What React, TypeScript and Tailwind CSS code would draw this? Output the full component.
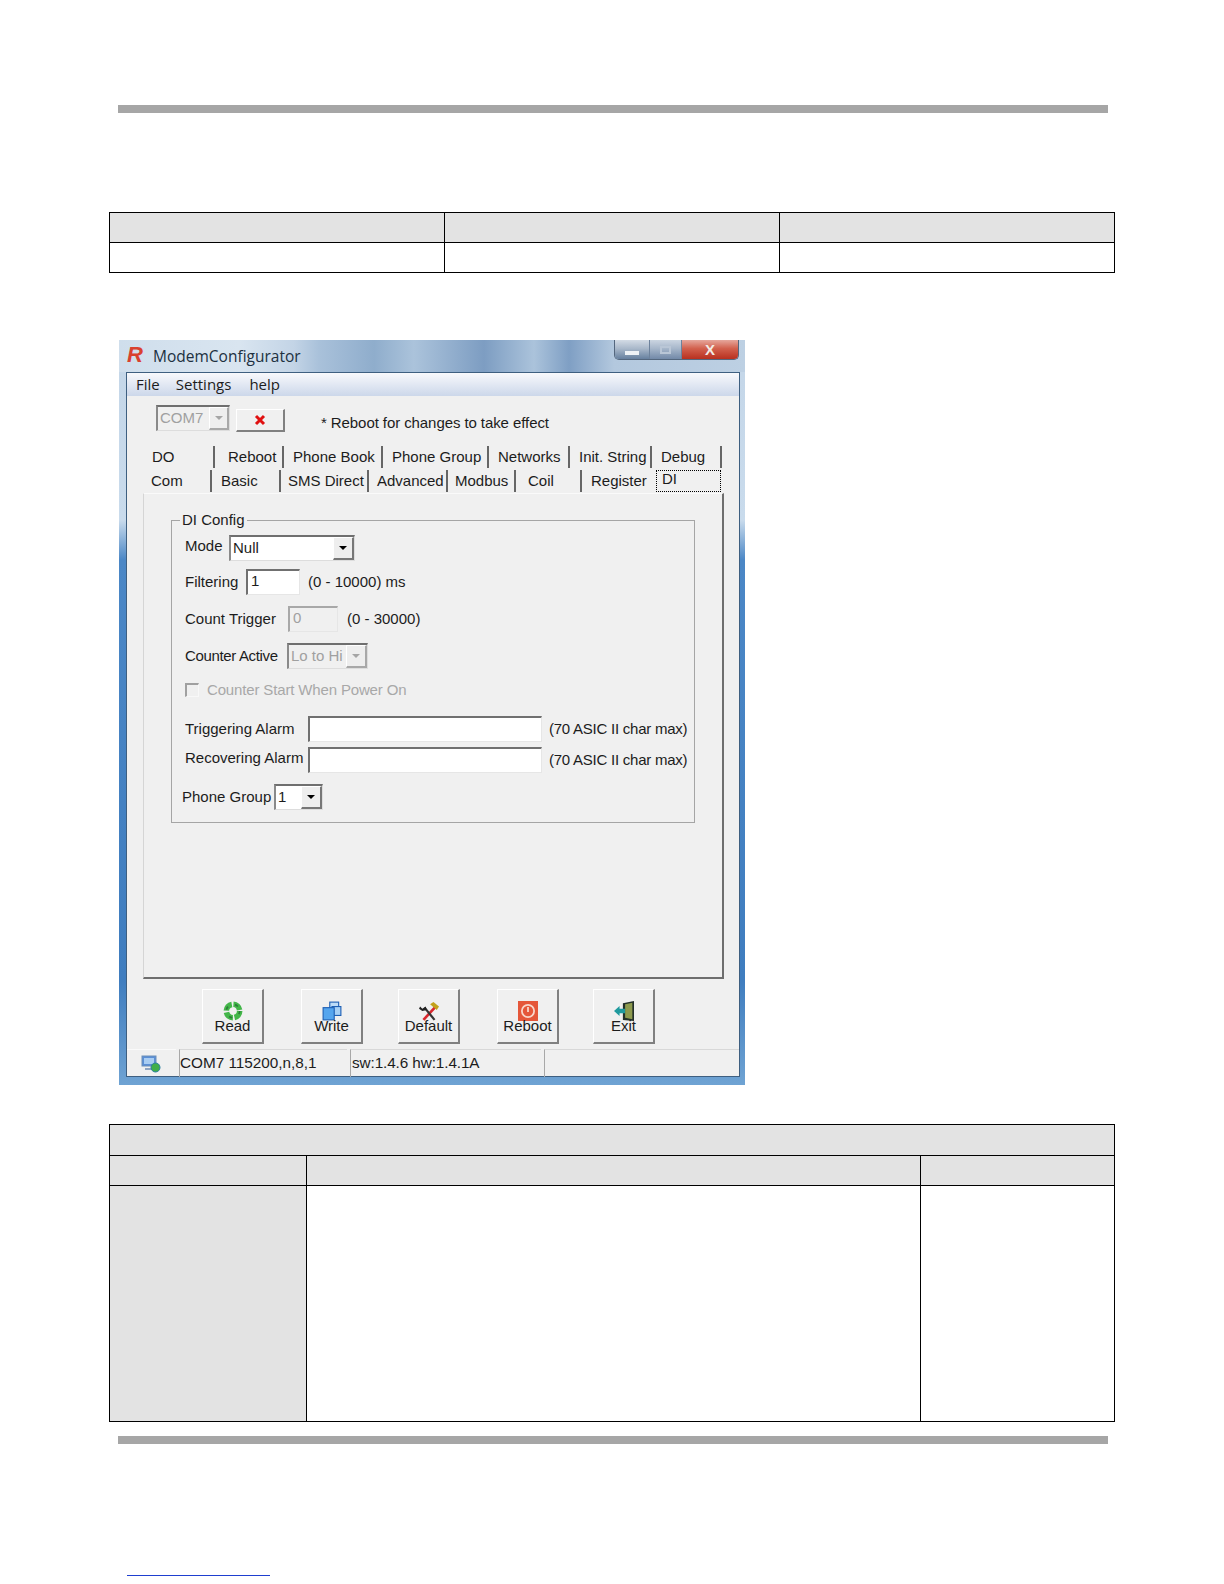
import type { ReactNode } from "react";

const Bar = () => <div className="ml-[118px] h-[8px] w-[990px] bg-[#a6a6a6]" />;

const HeadCell = ({ className = "", span }: { className?: string; span?: number }) => (
  <td colSpan={span} className={`h-[30px] border border-black bg-[#e3e3e3] ${className}`} />
);
const BodyCell = ({ className = "" }: { className?: string }) => (
  <td className={`border border-black bg-white ${className}`} />
);

const ArrowButton = ({ disabled, w }: { disabled?: boolean; w: string }) => (
  <div
    className={`${w} flex h-full shrink-0 items-center justify-center border-t border-l border-t-white border-l-white bg-[#eeeeee] border-r-2 border-b-2 ${
      disabled ? "border-r-[#a8a8a8] border-b-[#a8a8a8]" : "border-r-[#777777] border-b-[#777777]"
    }`}
  >
    <div
      className={`h-0 w-0 border-x-[4px] border-t-[4px] border-x-transparent ${
        disabled ? "border-t-[#a5a5a5]" : "border-t-black"
      }`}
    />
  </div>
);

const Combo = ({
  text,
  w,
  btn,
  disabled,
  h = "h-[26px]",
}: {
  text: string;
  w: string;
  btn: string;
  disabled?: boolean;
  h?: string;
}) => (
  <div
    className={`${w} ${h} flex shrink-0 items-center border-2 border-r border-b border-t-[#6f6f6f] border-l-[#8a8a8a] border-r-[#dddddd] border-b-[#dddddd] ${
      disabled ? "bg-[#f0f0f0] text-[#a0a0a0]" : "bg-white"
    }`}
  >
    <span className="flex-1 pl-[2px] whitespace-nowrap">{text}</span>
    <ArrowButton w={btn} disabled={disabled} />
  </div>
);

const Input = ({ w, value, disabled }: { w: string; value?: string; disabled?: boolean }) => (
  <div
    className={`${w} flex h-[26px] shrink-0 items-center border-t-2 border-l-2 border-r border-b border-r-[#e6e6e6] border-b-[#e6e6e6] pb-[3px] pl-[3px] ${
      disabled
        ? "border-t-[#a8a8a8] border-l-[#a8a8a8] bg-[#f0f0f0] text-[#a0a0a0]"
        : "border-t-[#707070] border-l-[#707070] bg-white"
    }`}
  >
    {value}
  </div>
);

const Row = ({ mt, children, className = "" }: { mt: string; children: ReactNode; className?: string }) => (
  <div className={`${mt} flex h-[26px] items-center whitespace-nowrap ${className}`}>{children}</div>
);

const Tab = ({ label, w, pl }: { label: string; w: string; pl: string }) => (
  <div className={`${w} ${pl} flex h-[22px] shrink-0 items-center whitespace-nowrap border-r-2 border-r-[#666666]`}>
    {label}
  </div>
);

const ToolButton = ({ icon, label, ml }: { icon: ReactNode; label: string; ml: string }) => (
  <div
    className={`${ml} flex h-[55px] w-[62px] shrink-0 flex-col items-center border-t border-l border-t-white border-l-white border-r-2 border-b-2 border-r-[#808080] border-b-[#808080] pt-[11px]`}
  >
    <div className="h-[20px] w-[20px]">{icon}</div>
    <div className="mt-[-4px] leading-[18px]">{label}</div>
  </div>
);

const ReadIcon = () => (
  <svg viewBox="0 0 18 18" className="h-full w-full">
    <circle cx="9" cy="9" r="6" fill="none" stroke="#43b649" strokeWidth="5" strokeDasharray="8 1.5" />
    <circle cx="9" cy="9" r="6" fill="none" stroke="#2c7d3a" strokeWidth="1.5" strokeDasharray="3 7" />
  </svg>
);

const WriteIcon = () => (
  <svg viewBox="0 0 18 18" className="h-full w-full">
    <rect x="7" y="1" width="8" height="8" fill="#bcdcf8" stroke="#1d5fb4" />
    <rect x="9" y="5" width="8" height="8" fill="#a5cff5" stroke="#1d5fb4" />
    <rect x="1" y="6" width="10" height="11" fill="#54a5ee" stroke="#1d5fb4" />
  </svg>
);

const DefaultIcon = () => (
  <svg viewBox="0 0 18 18" className="h-full w-full">
    <path d="M4 17 15 5" stroke="#d8282f" strokeWidth="2.4" />
    <path d="M5 6 14 17" stroke="#333333" strokeWidth="2" />
    <path d="M10 3 13 1 18 5 16 8Z" fill="#c2a21c" />
    <path d="M1 5 3 7 6 5 7 8 3 9 0 7Z" fill="#222222" />
  </svg>
);

const RebootIcon = () => (
  <svg viewBox="0 0 18 18" className="h-full w-full">
    <rect width="18" height="18" fill="#e5573a" />
    <circle cx="9" cy="9" r="5.5" fill="none" stroke="#f8d8cc" strokeWidth="1.6" />
    <path d="M9 5.5V10" stroke="#f8d8cc" strokeWidth="1.6" />
  </svg>
);

const ExitIcon = () => (
  <svg viewBox="0 0 18 18" className="h-full w-full">
    <path d="M8 2 18 0V18L8 17Z" fill="#23302a" />
    <path d="M10 3 16.5 1.5V16.5L10 15Z" fill="#8d9a4e" />
    <path d="M0 9 5 4.5V7H10V11H5V13.5Z" fill="#1f9a9e" />
  </svg>
);

const NetIcon = () => (
  <svg viewBox="0 0 20 18" className="h-[18px] w-[20px]">
    <rect x="1" y="1" width="14" height="10" fill="#5b8fd6" stroke="#6d8fb8" />
    <rect x="3" y="3" width="10" height="6" fill="#a9cdf2" />
    <rect x="4" y="13" width="9" height="2" fill="#8fa5c2" />
    <circle cx="14.5" cy="12.5" r="4.5" fill="#3fae49" stroke="#2b7fa0" />
  </svg>
);

const FrameBg =
  "bg-[linear-gradient(to_bottom,#c4d6e8_0px,#c9dbec_180px,#4b87c6_220px,#3f7dbf_640px,#6fa3d3_745px)]";
const TitleBg =
  "bg-[linear-gradient(to_right,#cfdeec_0px,#d9e5f0_120px,#c3d4e6_175px,#a9c1da_200px,#8fadcc_255px,#abc3db_295px,#7d9dc2_365px,#abc3db_415px,#7f9fc4_450px,#b3c8de_495px,#bdd0e3_626px)]";

const App = () => {
  return (
    <div className="h-[1584px] w-[1224px] overflow-hidden bg-white pt-[105px] font-['Liberation_Sans',Arial,sans-serif] text-[15px] text-[#1c1c1c]">
      <Bar />

      <table className="mt-[99px] ml-[109px] w-[1006px] table-fixed border-collapse">
        <colgroup>
          <col className="w-[335px]" />
          <col className="w-[335px]" />
          <col />
        </colgroup>
        <tbody>
          <tr>
            <HeadCell />
            <HeadCell />
            <HeadCell />
          </tr>
          <tr className="h-[30px]">
            <BodyCell />
            <BodyCell />
            <BodyCell />
          </tr>
        </tbody>
      </table>

      {/* screenshot of the configurator window */}
      <div className={`mt-[67px] ml-[119px] flex h-[745px] w-[626px] flex-col ${FrameBg}`}>
        <div className={`flex h-[32px] shrink-0 items-start pl-[8px] ${TitleBg}`}>
          <span className="mt-[3px] w-[26px] text-[22px] leading-[24px] font-bold text-[#d9412f] italic">R</span>
          <span className="mt-[5px] font-['Open_Sans',sans-serif] text-[15.5px] leading-[22px] text-[#20303f]">
            ModemConfigurator
          </span>
          <div className="mr-[6px] ml-auto flex h-[20px] overflow-hidden rounded-b-[5px] border border-t-0 border-[#54677e]">
            <div className="flex w-[34px] items-end justify-center bg-[linear-gradient(to_bottom,#d3dbe5,#a9b8ca_45%,#66809f)] pb-[4px]">
              <div className="h-[4px] w-[14px] bg-[#eef2f6]" />
            </div>
            <div className="flex w-[33px] items-center justify-center border-x border-[#6d829c] bg-[linear-gradient(to_bottom,#cbd5e1,#a6b6ca_45%,#7289a8)]">
              <div className="h-[8px] w-[11px] border-2 border-[#b9c6d6]" />
            </div>
            <div className="flex w-[56px] items-center justify-center bg-[linear-gradient(to_bottom,#e6a79c,#d2604d_45%,#b8301f)] text-[15px] leading-[18px] font-bold text-[#f3ece6]">
              X
            </div>
          </div>
        </div>

        <div className="ml-[7px] flex h-[705px] w-[614px] shrink-0 flex-col border border-[#3e5f80] bg-[#f0f0f0]">
          <div className="flex h-[23px] shrink-0 items-center bg-[linear-gradient(to_bottom,#f8f9fc,#ccd7ea)] pl-[9px] font-['Open_Sans',sans-serif]">
            <span>File</span>
            <span className="ml-[16px]">Settings</span>
            <span className="ml-[18px]">help</span>
          </div>

          <div className="flex h-[50px] shrink-0 items-start pt-[9px] pl-[29px]">
            <Combo text="COM7" w="w-[74px]" btn="w-[20px]" disabled />
            <div className="mt-[4px] ml-[6px] flex h-[23px] w-[49px] items-center justify-center border-t border-l border-t-white border-l-white border-r-2 border-b-2 border-r-[#808080] border-b-[#808080]">
              <svg viewBox="0 0 12 12" className="h-[12px] w-[12px]">
                <path d="M2 2 10 10M10 2 2 10" stroke="#e01010" strokeWidth="3" />
              </svg>
            </div>
            <span className="mt-[7px] ml-[36px] tracking-[-0.08px] whitespace-nowrap">
              * Reboot for changes to take effect
            </span>
          </div>

          <div className="ml-[19px] flex h-[22px] shrink-0">
            <Tab label="DO" w="w-[69px]" pl="pl-[6px]" />
            <Tab label="Reboot" w="w-[69px]" pl="pl-[13px]" />
            <Tab label="Phone Book" w="w-[99px]" pl="pl-[9px]" />
            <Tab label="Phone Group" w="w-[106px]" pl="pl-[9px]" />
            <Tab label="Networks" w="w-[81px]" pl="pl-[9px]" />
            <Tab label="Init. String" w="w-[82px]" pl="pl-[9px]" />
            <Tab label="Debug" w="w-[70px]" pl="pl-[9px]" />
          </div>
          <div className="ml-[19px] flex h-[25px] shrink-0 pt-[2px]">
            <Tab label="Com" w="w-[66px]" pl="pl-[5px]" />
            <Tab label="Basic" w="w-[69px]" pl="pl-[9px]" />
            <Tab label="SMS Direct" w="w-[88px]" pl="pl-[7px]" />
            <Tab label="Advanced" w="w-[79px]" pl="pl-[8px]" />
            <Tab label="Modbus" w="w-[68px]" pl="pl-[7px]" />
            <Tab label="Coil" w="w-[66px]" pl="pl-[12px]" />
            <div className="flex h-[22px] w-[74px] shrink-0 items-center pl-[9px]">Register</div>
            <div className="flex h-[22px] w-[65px] shrink-0 items-center border border-dotted border-black pb-[3px] pl-[5px]">
              DI
            </div>
          </div>

          {/* tab page */}
          <div className="ml-[16px] h-[486px] w-[581px] shrink-0 border-t border-l border-t-[#fafafa] border-l-[#d5d5d5] border-r-2 border-b-2 border-r-[#6e6e6e] border-b-[#6e6e6e] pt-[26px] pl-[27px]">
            <div className="relative h-[303px] w-[524px] border border-[#a5a5a5] pl-[13px]">
              <span className="absolute top-[-10px] left-[8px] bg-[#f0f0f0] px-[2px] leading-[18px]">DI Config</span>

              <Row mt="mt-[14px]">
                <span className="mb-[4px] w-[44px]">Mode</span>
                <Combo text="Null" w="w-[126px]" btn="w-[21px]" />
              </Row>
              <Row mt="mt-[8px]">
                <span className="w-[61px]">Filtering</span>
                <Input w="w-[54px]" value="1" />
                <span className="ml-[8px]">(0 - 10000) ms</span>
              </Row>
              <Row mt="mt-[11px]">
                <span className="w-[103px]">Count Trigger</span>
                <Input w="w-[50px]" value="0" disabled />
                <span className="ml-[9px]">(0 - 30000)</span>
              </Row>
              <Row mt="mt-[11px]">
                <span className="w-[102px] tracking-[-0.35px]">Counter Active</span>
                <Combo text="Lo to Hi" w="w-[81px]" btn="w-[21px]" disabled />
              </Row>
              <div className="mt-[14px] flex h-[14px] items-center whitespace-nowrap text-[#a8a8a8]">
                <div className="h-[14px] w-[14px] border-2 border-r border-b border-t-[#a0a0a0] border-l-[#a0a0a0] border-r-[#f8f8f8] border-b-[#f8f8f8]" />
                <span className="ml-[8px] tracking-[-0.15px]">Counter Start When Power On</span>
              </div>
              <Row mt="mt-[19px]">
                <span className="w-[123px]">Triggering Alarm</span>
                <Input w="w-[234px]" />
                <span className="ml-[7px] tracking-[-0.24px]">(70 ASIC II char max)</span>
              </Row>
              <Row mt="mt-[5px]">
                <span className="mb-[3px] w-[123px]">Recovering Alarm</span>
                <Input w="w-[234px]" />
                <span className="ml-[7px] tracking-[-0.24px]">(70 ASIC II char max)</span>
              </Row>
              <Row mt="mt-[11px]" className="ml-[-3px]">
                <span className="w-[92px]">Phone Group</span>
                <Combo text="1" w="w-[49px]" btn="w-[21px]" />
              </Row>
            </div>
          </div>

          <div className="flex h-[70px] shrink-0 items-start pt-[10px] pl-[75px]">
            <ToolButton icon={<ReadIcon />} label="Read" ml="ml-0" />
            <ToolButton icon={<WriteIcon />} label="Write" ml="ml-[37px]" />
            <ToolButton icon={<DefaultIcon />} label="Default" ml="ml-[35px]" />
            <ToolButton icon={<RebootIcon />} label="Reboot" ml="ml-[37px]" />
            <ToolButton icon={<ExitIcon />} label="Exit" ml="ml-[34px]" />
          </div>

          <div className="flex h-[28px] shrink-0 gap-[3px] text-[15.3px]">
            <div className="flex w-[49px] items-center justify-center border-t border-[#fafafa] pr-[2px]">
              <NetIcon />
            </div>
            <div className="flex w-[168px] items-center whitespace-nowrap border-t border-l border-t-[#d8d8d8] border-l-[#a8a8a8]">
              COM7 115200,n,8,1
            </div>
            <div className="flex w-[191px] items-center whitespace-nowrap border-t border-l border-t-[#d8d8d8] border-l-[#a8a8a8] pl-[1px] tracking-[-0.1px]">
              sw:1.4.6 hw:1.4.1A
            </div>
            <div className="flex-1 border-t border-l border-t-[#d8d8d8] border-l-[#a8a8a8]" />
          </div>
        </div>
      </div>

      <table className="mt-[39px] ml-[109px] w-[1006px] table-fixed border-collapse">
        <colgroup>
          <col className="w-[197px]" />
          <col className="w-[614px]" />
          <col />
        </colgroup>
        <tbody>
          <tr>
            <HeadCell span={3} className="h-[31px]" />
          </tr>
          <tr>
            <HeadCell />
            <HeadCell />
            <HeadCell />
          </tr>
          <tr className="h-[236px]">
            <HeadCell className="h-[236px]" />
            <BodyCell />
            <BodyCell />
          </tr>
        </tbody>
      </table>

      <div className="mt-[14px]">
        <Bar />
      </div>

      <div className="mt-[131px] ml-[127px] h-[1px] w-[143px] bg-[#1f3fd0]" />
    </div>
  );
};

export default App;
